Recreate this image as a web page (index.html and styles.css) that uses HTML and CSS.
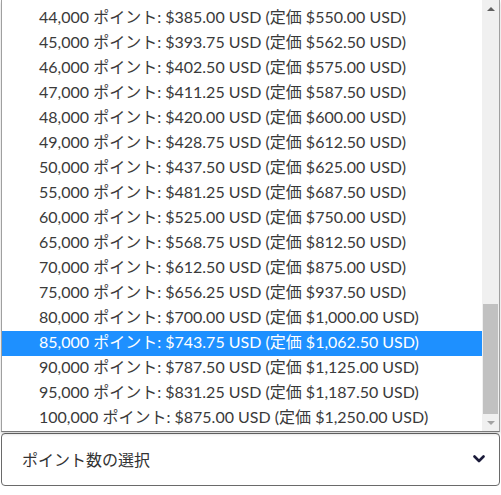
FILE: index.html
```html
<!DOCTYPE html>
<html lang="ja">
<head>
<meta charset="utf-8">
<link rel="stylesheet" href="styles.css">
</head>
<body>
<div class="popup">
  <ul class="options">
    <li>44,000 ポイント: $385.00 USD (定価 $550.00 USD)</li>
    <li>45,000 ポイント: $393.75 USD (定価 $562.50 USD)</li>
    <li>46,000 ポイント: $402.50 USD (定価 $575.00 USD)</li>
    <li>47,000 ポイント: $411.25 USD (定価 $587.50 USD)</li>
    <li>48,000 ポイント: $420.00 USD (定価 $600.00 USD)</li>
    <li>49,000 ポイント: $428.75 USD (定価 $612.50 USD)</li>
    <li>50,000 ポイント: $437.50 USD (定価 $625.00 USD)</li>
    <li>55,000 ポイント: $481.25 USD (定価 $687.50 USD)</li>
    <li>60,000 ポイント: $525.00 USD (定価 $750.00 USD)</li>
    <li>65,000 ポイント: $568.75 USD (定価 $812.50 USD)</li>
    <li>70,000 ポイント: $612.50 USD (定価 $875.00 USD)</li>
    <li>75,000 ポイント: $656.25 USD (定価 $937.50 USD)</li>
    <li>80,000 ポイント: $700.00 USD (定価 $1,000.00 USD)</li>
    <li class="selected">85,000 ポイント: $743.75 USD (定価 $1,062.50 USD)</li>
    <li>90,000 ポイント: $787.50 USD (定価 $1,125.00 USD)</li>
    <li>95,000 ポイント: $831.25 USD (定価 $1,187.50 USD)</li>
    <li>100,000 ポイント: $875.00 USD (定価 $1,250.00 USD)</li>
  </ul>
  <div class="scrollbar">
    <div class="arrow up"></div>
    <div class="track"><div class="thumb"></div></div>
    <div class="arrow down"></div>
  </div>
</div>
<div class="select">
  <span class="label">ポイント数の選択</span>
  <svg class="chevron" width="12" height="8" viewBox="0 0 12 8"><path d="M1.5 1.5 L6 6 L10.5 1.5" fill="none" stroke="#1b1b3a" stroke-width="2.6" stroke-linecap="round" stroke-linejoin="round"/></svg>
</div>
</body>
</html>
```
FILE: styles.css
```css
html, body {
  margin: 0;
  padding: 0;
  background: #ffffff;
}
body {
  width: 501px;
  height: 495px;
  overflow: hidden;
  font-family: "Lato", "Noto Sans CJK JP", sans-serif;
  color: #333333;
}
.popup {
  margin-left: 1px;
  width: 497px;
  height: 431px;
  border-left: 1px solid #a0a0a0;
  border-right: 1px solid #a0a0a0;
  border-bottom: 1px solid #7a7a7a;
  display: flex;
  box-shadow: 0 2px 3px rgba(0,0,0,0.18);
  position: relative;
  z-index: 1;
  background: #fff;
}
.options {
  list-style: none;
  margin: 0;
  padding: 6px 0 0 0;
  flex: 1;
}
.options li {
  height: 25px;
  line-height: 22px;
  padding-left: 37px;
  font-size: 16px;
  white-space: nowrap;
  color: #3a3a3a;
  box-sizing: border-box;
}
.options li.selected {
  background: #1e90ff;
  color: #ffffff;
}
.scrollbar {
  width: 15px;
  display: flex;
  flex-direction: column;
  background: #f0f0f0;
  padding: 0 1px;
}
.arrow {
  height: 17px;
  display: flex;
  align-items: center;
  justify-content: center;
}
.arrow::before {
  content: "";
  width: 0;
  height: 0;
  border-left: 4px solid transparent;
  border-right: 4px solid transparent;
}
.arrow.up::before {
  border-bottom: 4px solid #606060;
}
.arrow.down::before {
  border-top: 4px solid #a3a3a3;
}
.track {
  flex: 1;
  display: flex;
  flex-direction: column;
  justify-content: flex-end;
}
.thumb {
  height: 110px;
  background: #c1c1c1;
}
.select {
  margin-left: 1px;
  margin-top: 1px;
  width: 499px;
  height: 53px;
  border: 1px solid #6a6a6a;
  border-radius: 4px;
  display: flex;
  align-items: center;
  justify-content: space-between;
  padding: 0 14px 2px 20px;
  box-sizing: border-box;
}
.label {
  font-size: 16px;
  color: #333333;
}
.chevron {
  display: block;
}
```
